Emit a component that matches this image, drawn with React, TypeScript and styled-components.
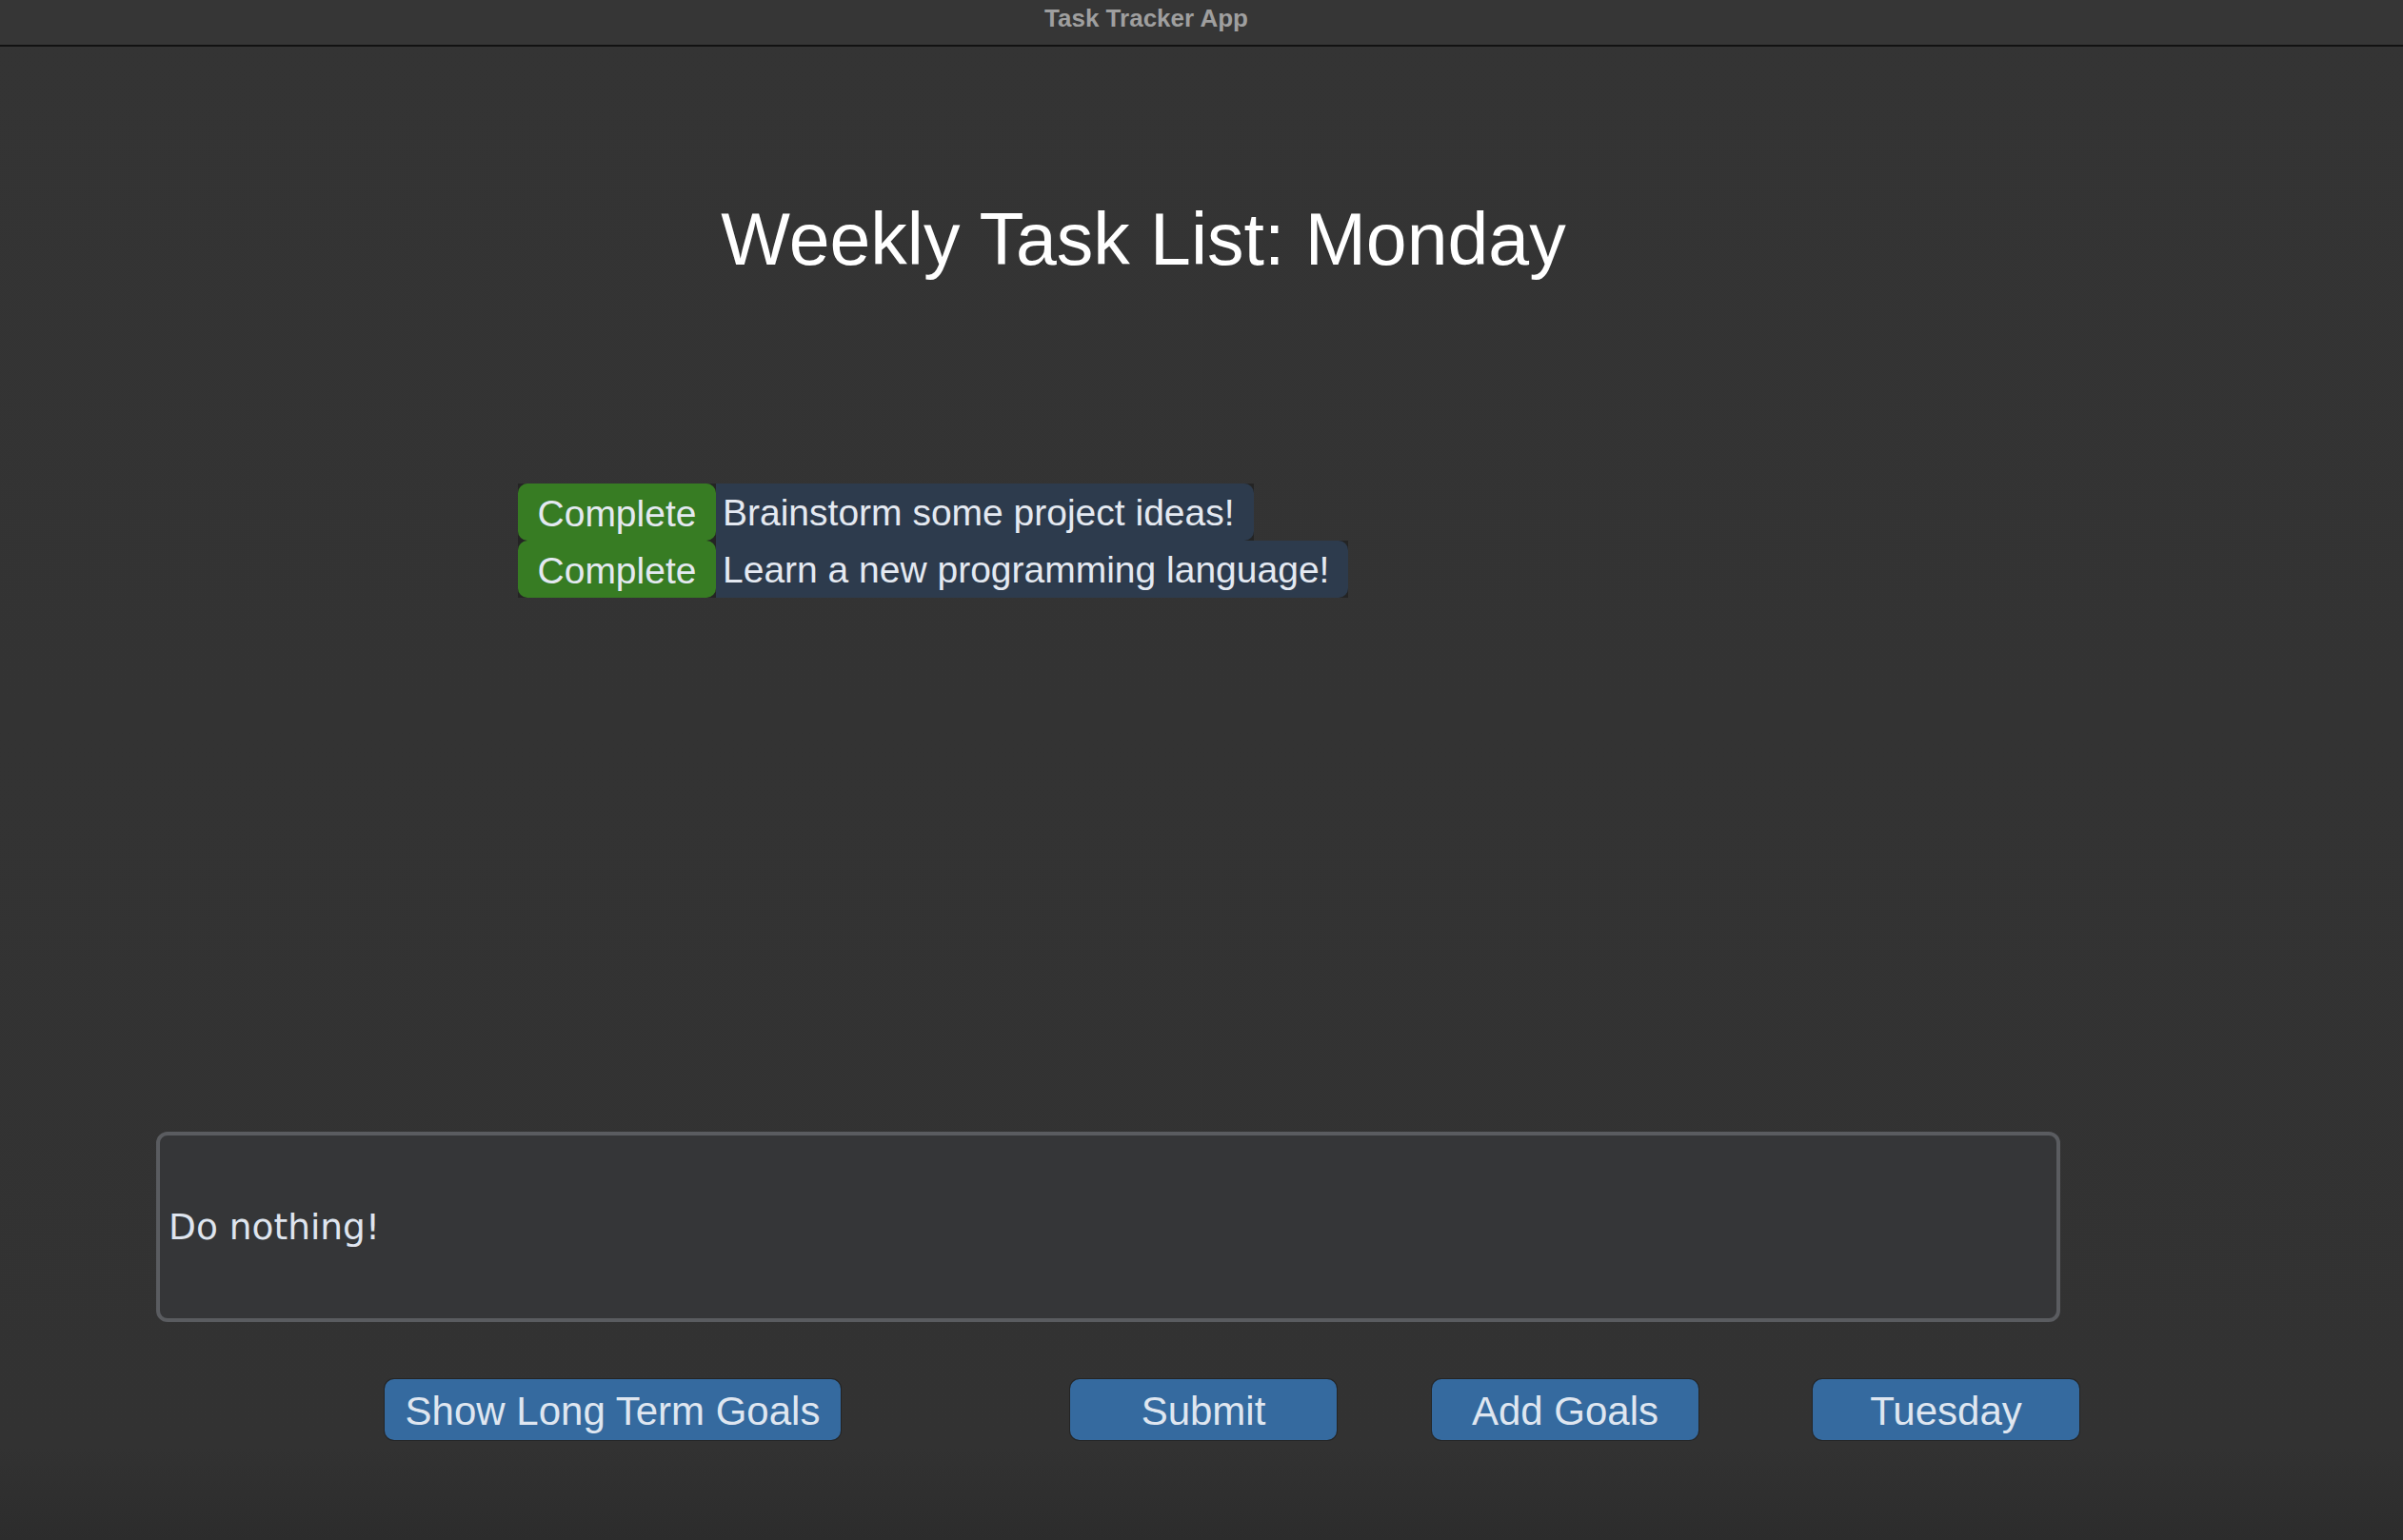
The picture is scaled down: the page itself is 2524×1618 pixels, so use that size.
import React from "react";
import styled, { createGlobalStyle } from "styled-components";

const GlobalStyle = createGlobalStyle`
  html, body {
    margin: 0;
    padding: 0;
    background: #333333;
  }
  * { box-sizing: border-box; }
`;

const Window = styled.div`
  width: 2524px;
  min-height: 1618px;
  display: flex;
  flex-direction: column;
  background: linear-gradient(to bottom, #343434 0%, #323232 94%, #2c2c2c 100%);
  font-family: "Liberation Sans", Arial, sans-serif;
`;

const TitleBar = styled.div`
  height: 49px;
  background: #363636;
  border-bottom: 2px solid #121212;
  display: flex;
  align-items: center;
  justify-content: center;
  padding-right: 116px;
  padding-bottom: 9px;
  color: #9f9f9f;
  font-weight: 700;
  font-size: 26px;
`;

const Main = styled.main`
  display: flex;
  flex-direction: column;
`;

const Heading = styled.h1`
  margin: 164px 0 0;
  padding-right: 122px;
  text-align: center;
  font-weight: 400;
  font-size: 77px;
  line-height: 1;
  color: #ffffff;
`;

const TaskList = styled.div`
  margin-top: 218px;
  padding-left: 544px;
  display: flex;
  flex-direction: column;
  align-items: flex-start;
`;

const TaskRow = styled.div`
  display: flex;
  align-items: stretch;
  height: 60px;
`;

const Slot = styled.div`
  display: flex;
  background: #242424;
`;

const CompleteButton = styled.button`
  width: 208px;
  border: none;
  margin: 0;
  padding: 4px 0 0;
  border-radius: 10px;
  background: #377c23;
  color: #e4e9f1;
  font-family: "Liberation Sans", Arial, sans-serif;
  font-size: 39px;
  display: flex;
  align-items: center;
  justify-content: center;
`;

const TaskLabel = styled.div`
  display: flex;
  align-items: center;
  padding: 2px 20px 0 7px;
  background: #2d3b4d;
  border-radius: 0 10px 10px 0;
  color: #e4e9f1;
  font-size: 39px;
  white-space: nowrap;
`;

const InputBox = styled.div`
  margin: 561px 0 0 164px;
  width: 2000px;
  height: 200px;
  border: 4px solid #5a5c60;
  border-radius: 12px;
  background: #353638;
  display: flex;
  align-items: center;
  padding-left: 9px;
  color: #dfe5ef;
  font-family: "DejaVu Sans", Verdana, sans-serif;
  font-size: 37.5px;
`;

const ButtonRow = styled.div`
  margin: 60px 0 0 404px;
  display: flex;
  align-items: flex-start;
`;

const ActionButton = styled.button<{ $w: number; $gap: number }>`
  width: ${(p) => p.$w}px;
  margin-left: ${(p) => p.$gap}px;
  height: 64px;
  border: none;
  padding: 4px 0 0;
  border-radius: 10px;
  background: #356a9f;
  color: #dfe6f0;
  font-family: "Liberation Sans", Arial, sans-serif;
  font-size: 42px;
  display: flex;
  align-items: center;
  justify-content: center;
  box-shadow: 0 0 0 1px #242424;
`;

const tasks = ["Brainstorm some project ideas!", "Learn a new programming language!"];

const buttons = [
  { label: "Show Long Term Goals", w: 479, gap: 0 },
  { label: "Submit", w: 280, gap: 241 },
  { label: "Add Goals", w: 280, gap: 100 },
  { label: "Tuesday", w: 280, gap: 120 },
];

export default function App() {
  return (
    <>
      <GlobalStyle />
      <Window>
        <TitleBar>Task Tracker App</TitleBar>
        <Main>
          <Heading>Weekly Task List: Monday</Heading>
          <TaskList>
            {tasks.map((t) => (
              <TaskRow key={t}>
                <Slot>
                  <CompleteButton>Complete</CompleteButton>
                </Slot>
                <Slot>
                  <TaskLabel>{t}</TaskLabel>
                </Slot>
              </TaskRow>
            ))}
          </TaskList>
          <InputBox>Do nothing!</InputBox>
          <ButtonRow>
            {buttons.map((b) => (
              <ActionButton key={b.label} $w={b.w} $gap={b.gap}>
                {b.label}
              </ActionButton>
            ))}
          </ButtonRow>
        </Main>
      </Window>
    </>
  );
}
